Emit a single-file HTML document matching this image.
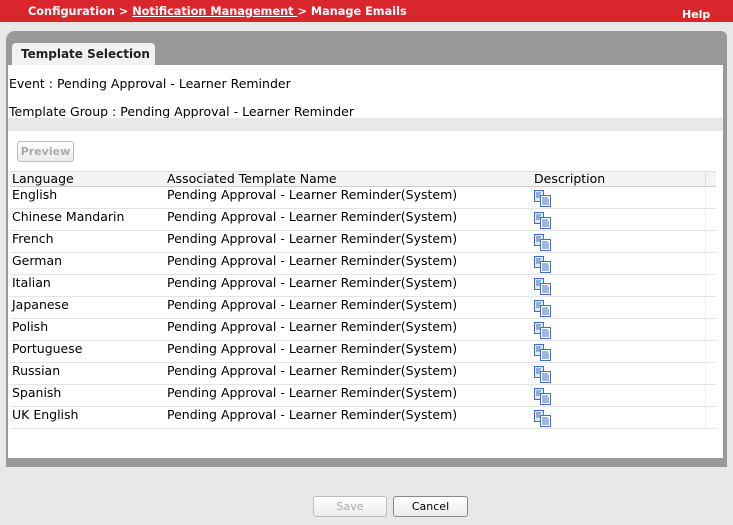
<!DOCTYPE html>
<html><head><style>
body{margin:0;width:733px;height:525px;background:#e8e8e8;font-family:"DejaVu Sans",Verdana,sans-serif;position:relative;overflow:hidden}
.top{position:absolute;left:0;top:0;width:733px;height:22px;background:#d9262c;color:#fff;font-weight:bold;font-size:11.3px}
.top .bc{position:absolute;left:28px;top:5px;white-space:nowrap}
.top .bc u{text-decoration:underline}
.top .help{position:absolute;left:682px;top:8px;font-size:11px}
.panel{position:absolute;left:6px;top:31px;width:721px;height:436px;background:#999;border-radius:9px 6px 0 0}
.tab{position:absolute;left:12px;top:43px;width:143px;height:22px;background:#f2f2f2;border-radius:4px 4px 0 0;font-weight:bold;font-size:12px;color:#222;line-height:22px;text-indent:9px;white-space:nowrap}
.content{position:absolute;left:8px;top:65px;width:715px;height:393px;background:#fff;overflow:hidden}
.t{position:absolute;font-size:12.5px;color:#000;left:1px;white-space:nowrap}
.band{position:absolute;left:0;top:53px;width:715px;height:13px;background:#e8e8e8}
.btn{position:absolute;border:1px solid #bbb;border-radius:3px;background:linear-gradient(#fff,#ececec);font-size:11px;text-align:center;box-sizing:border-box}
table{position:absolute;left:2px;top:106px;border-collapse:collapse;font-size:12.5px;table-layout:fixed;width:706px}
td{height:21px;padding:0 0 0 2px;border-bottom:1px solid #e4e4e4;vertical-align:top;line-height:16px;white-space:nowrap;overflow:hidden}
th{font-weight:normal;text-align:left;padding:0 0 0 2px;height:14px;line-height:14px;background:#f4f4f4;border-top:1px solid #ddd;border-bottom:1px solid #ccc;white-space:nowrap}
.ic{display:block;margin-top:3px}
</style></head><body>
<div class="top"><span class="bc">Configuration &gt; <u>Notification Management </u>&gt; Manage Emails</span><span class="help">Help</span></div>
<div class="panel"></div>
<div class="tab">Template Selection</div>
<div class="content">
<div class="t" style="top:11px">Event : Pending Approval - Learner Reminder</div>
<div class="t" style="top:39px">Template Group : Pending Approval - Learner Reminder</div>
<div class="band"></div>
<div class="btn" style="left:9px;top:76px;width:57px;height:21px;color:#aaa;font-weight:bold;line-height:19px">Preview</div>
<table>
<colgroup><col style="width:155px"><col style="width:367px"><col style="width:173px"><col style="width:11px"></colgroup>
<tr><th>Language</th><th>Associated Template Name</th><th>Description</th><th style="border-left:1px solid #ddd"></th></tr>
<tbody id="b"></tbody>
</table>
</div>
<div class="btn" style="left:313px;top:496px;width:74px;height:21px;color:#aaa;line-height:19px">Save</div>
<div class="btn" style="left:393px;top:496px;width:75px;height:21px;color:#000;border-color:#888;line-height:19px">Cancel</div>
<script>
var L=["English","Chinese Mandarin","French","German","Italian","Japanese","Polish","Portuguese","Russian","Spanish","UK English"];
var ic='<svg class="ic" width="18" height="17" viewBox="0 0 18 17"><rect x="0.5" y="0.5" width="9" height="11" fill="#dfe9f7" stroke="#3a6fc4"/><rect x="6.5" y="5.5" width="10" height="11" fill="#fff" stroke="#3a6fc4"/><path d="M2 3h5M2 5h4M2 7h4M8 8h6M8 10h7M8 12h7M8 14h7" stroke="#3a6fc4" stroke-width="1"/></svg>';
var h="";L.forEach(function(l){h+='<tr><td>'+l+'</td><td>Pending Approval - Learner Reminder(System)</td><td>'+ic+'</td><td style="border-left:1px solid #eee"></td></tr>'});
document.getElementById("b").innerHTML=h;
</script>
</body></html>
